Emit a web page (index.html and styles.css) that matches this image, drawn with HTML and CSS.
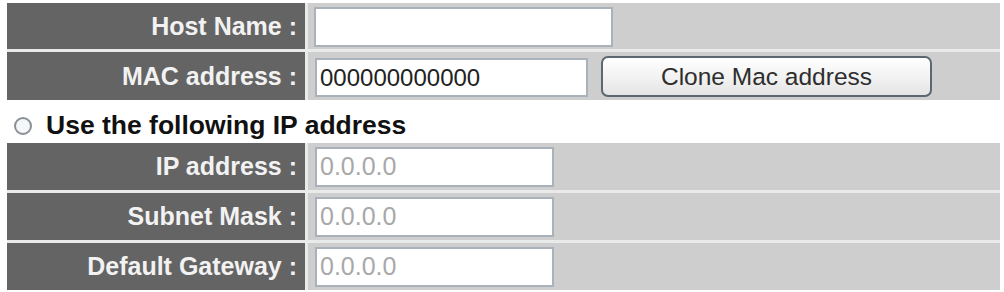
FILE: index.html
```html
<!DOCTYPE html>
<html>
<head>
<meta charset="utf-8">
<link rel="stylesheet" href="styles.css">
</head>
<body>
<div class="page">
  <div class="group">
    <div class="row r-host">
      <div class="label">Host Name :</div>
      <div class="field"><input class="text host" type="text" value=""></div>
    </div>
    <div class="row r-mac">
      <div class="label">MAC address :</div>
      <div class="field">
        <input class="text mac" type="text" value="000000000000">
        <button class="btn" type="button">Clone Mac address</button>
      </div>
    </div>
  </div>
  <div class="radio-row">
    <svg class="radio" width="20" height="20" viewBox="0 0 20 20"><circle cx="10" cy="10" r="8" fill="#f4f6f8" stroke="#8a9096" stroke-width="2"/></svg>
    <span class="radio-label">Use the following IP address</span>
  </div>
  <div class="group">
    <div class="row r-ip">
      <div class="label">IP address :</div>
      <div class="field"><input class="text ip" type="text" value="0.0.0.0" disabled></div>
    </div>
    <div class="row r-ip">
      <div class="label">Subnet Mask :</div>
      <div class="field"><input class="text ip" type="text" value="0.0.0.0" disabled></div>
    </div>
    <div class="row r-ip">
      <div class="label">Default Gateway :</div>
      <div class="field"><input class="text ip" type="text" value="0.0.0.0" disabled></div>
    </div>
  </div>
</div>
</body>
</html>
```
FILE: styles.css
```css
html, body {
  margin: 0;
  padding: 0;
  background: #ffffff;
}
body {
  font-family: "Liberation Sans", Arial, sans-serif;
}
.page {
  padding: 3px 4px 0 7px;
}
.group {
  display: flex;
  flex-direction: column;
  gap: 3px;
  background: #e9eaea;
}
.row {
  display: flex;
  gap: 3px;
}
.r-host { height: 46px; }
.r-mac { height: 48px; }
.r-ip { height: 47px; }
.label {
  width: 290px;
  flex: none;
  background: #646464;
  color: #f2f2f2;
  font-weight: bold;
  font-size: 25px;
  text-align: right;
  padding-right: 8px;
  display: flex;
  align-items: center;
  justify-content: flex-end;
}
.field {
  flex: 1;
  background: #cecece;
  display: flex;
  align-items: center;
  padding-left: 6px;
  gap: 13px;
}
.text {
  box-sizing: border-box;
  border: 2px solid #a9b1ba;
  background: #ffffff;
  font-family: "Liberation Sans", Arial, sans-serif;
  font-size: 24px;
  padding: 0 3px;
  margin: 0;
  outline: none;
  color: #222;
}
.host { width: 299px; height: 40px; margin-top: 1px; }
.mac { width: 273px; height: 39px; margin-left: 1px; margin-top: 3px; }
.ip {
  width: 239px;
  height: 40px;
  margin-left: 1px;
  color: #a8a8a8;
  -webkit-text-fill-color: #a8a8a8;
  font-size: 25px;
}
.btn {
  box-sizing: border-box;
  width: 331px;
  height: 41px;
  border: 2px solid #5b6872;
  border-radius: 7px;
  background: linear-gradient(#ffffff, #f0f0f0 60%, #e4e4e4);
  font-family: "Liberation Sans", Arial, sans-serif;
  font-size: 24.5px;
  color: #2e2e2e;
  padding: 0;
  margin-top: 1px;
}
.radio-row {
  box-sizing: border-box;
  height: 43px;
  display: flex;
  align-items: center;
  padding-left: 6px;
  padding-top: 8px;
  gap: 13px;
}
.radio { flex: none; margin-top: 0; }
.radio-label {
  font-weight: bold;
  font-size: 26.5px;
  color: #111;
}
```
